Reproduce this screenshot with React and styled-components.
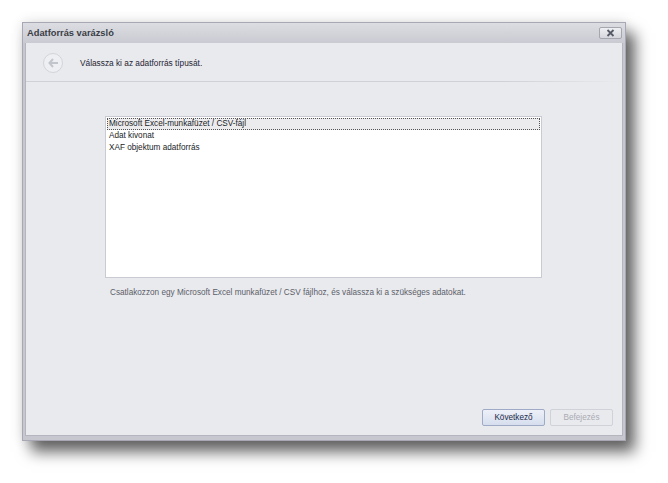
import React, { useState } from 'react';
import styled, { createGlobalStyle } from 'styled-components';

const GlobalStyle = createGlobalStyle`
    html, body {
        margin: 0;
        padding: 0;
        background: #ffffff;
    }
    body {
        font-family: "Liberation Sans", Arial, sans-serif;
    }
`;

const items = ['Microsoft Excel-munkafüzet / CSV-fájl', 'Adat kivonat', 'XAF objektum adatforrás'];

export default function App() {
    const [selected, setSelected] = useState(0);

    return (
        <>
            <GlobalStyle />
            <Page>
                <Window>
                    <TitleBar>
                        <Title>Adatforrás varázsló</Title>
                        <CloseButton>
                            <svg width="9" height="8" viewBox="0 0 9 8">
                                <path d="M1.5 1 L7.5 7 M7.5 1 L1.5 7" stroke="#555a66" strokeWidth="1.8" />
                            </svg>
                        </CloseButton>
                    </TitleBar>

                    <Body>
                        <Header>
                            <BackButton>
                                <svg width="11" height="10" viewBox="0 0 11 10">
                                    <path d="M5 1 L1.5 5 L5 9 M1.5 5 H10" stroke="#c3c5cc" strokeWidth="2" fill="none" />
                                </svg>
                            </BackButton>
                            <HeaderText>Válassza ki az adatforrás típusát.</HeaderText>
                        </Header>

                        <Content>
                            <ListBox>
                                {items.map((item, i) => (
                                    <ListItem key={item} selected={i === selected} onClick={() => setSelected(i)}>
                                        {item}
                                    </ListItem>
                                ))}
                            </ListBox>
                            <Description>
                                Csatlakozzon egy Microsoft Excel munkafüzet / CSV fájlhoz, és válassza ki a szükséges adatokat.
                            </Description>
                        </Content>

                        <Footer>
                            <Button primary>Következő</Button>
                            <Button disabled>Befejezés</Button>
                        </Footer>
                    </Body>
                </Window>
            </Page>
        </>
    );
}

const Page = styled.div`
    width: 668px;
    height: 483px;
    padding: 22px 0 0 22px;
    box-sizing: border-box;
`;

const Window = styled.div`
    width: 604px;
    height: 419px;
    box-sizing: border-box;
    display: flex;
    flex-direction: column;

    background: #c6c7cf;
    border: 1px solid #a7a8b3;
    box-shadow: 9px 11px 14px rgba(0, 0, 0, 0.6), 0 0 12px rgba(0, 0, 0, 0.12);
`;

const TitleBar = styled.div`
    height: 20px;
    display: flex;
    align-items: center;
    justify-content: space-between;
    padding: 0 3px 0 4px;

    background: linear-gradient(#dcdde2, #cacbd2);
`;

const Title = styled.div`
    color: #3a3d46;
    font-size: 9.3px;
    font-weight: bold;
`;

const CloseButton = styled.div`
    width: 21px;
    height: 10px;
    display: flex;
    align-items: center;
    justify-content: center;

    border: 1px solid #a4a6b0;
    border-radius: 2px;
    background: linear-gradient(#eeeff2, #d6d7dd);
`;

const Body = styled.div`
    flex: 1;
    margin: 0 2px 4px 2px;
    display: flex;
    flex-direction: column;

    background: #e9eaee;
    border: 1px solid #b4b5bf;
    border-top: none;
`;

const Header = styled.div`
    height: 37px;
    display: flex;
    align-items: center;
    gap: 17px;
    padding: 1px 0 0 17px;

    border-bottom: 1px solid;
    border-image: linear-gradient(to right, #d0d1d8 0%, #d0d1d8 80%, #e9eaee 100%) 1;
`;

const BackButton = styled.div`
    width: 18px;
    height: 18px;
    display: flex;
    align-items: center;
    justify-content: center;

    border: 1px solid #d3d4da;
    border-radius: 50%;
    background: #eeeff2;
`;

const HeaderText = styled.div`
    color: #1f2433;
    font-size: 8.3px;
`;

const Content = styled.div`
    flex: 1;
    padding: 34px 0 0 79px;
`;

const ListBox = styled.div`
    width: 437px;
    height: 162px;
    box-sizing: border-box;
    padding: 1px;

    background: #ffffff;
    border: 1px solid #c9cad2;
`;

const ListItem = styled.div`
    height: 12px;
    padding-left: 1px;
    box-sizing: border-box;

    color: #1a1d26;
    font-size: 8.2px;
    line-height: 10px;
    white-space: nowrap;

    background: ${(p) => (p.selected ? '#ececef' : 'transparent')};
    border: 1px ${(p) => (p.selected ? 'dotted #555' : 'solid transparent')};
`;

const Description = styled.div`
    margin: 10px 0 0 5px;

    color: #5b5e68;
    font-size: 8.2px;
`;

const Footer = styled.div`
    display: flex;
    justify-content: flex-end;
    gap: 5px;
    padding: 0 9px 9px 0;
`;

const Button = styled.div`
    width: 63px;
    height: 17px;
    box-sizing: border-box;
    display: flex;
    align-items: center;
    justify-content: center;

    font-size: 8.2px;
    border-radius: 2px;

    color: ${(p) => (p.disabled ? '#a9abb3' : '#1c2a4a')};
    border: 1px solid ${(p) => (p.primary ? '#9fabc6' : '#d1d2d9')};
    background: ${(p) => (p.primary ? 'linear-gradient(#edf0f8, #d6deee)' : '#e9eaee')};
`;
